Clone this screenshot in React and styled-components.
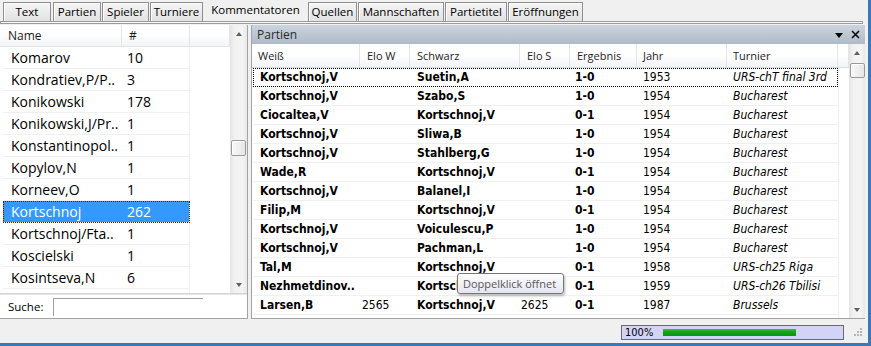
import React from 'react';
import styled, { createGlobalStyle } from 'styled-components';

const Global = createGlobalStyle`
  html, body { margin: 0; padding: 0; background: #f0f0f0; }
  body { font-family: "Open Sans", "Noto Sans", sans-serif; overflow: hidden; }
  * { box-sizing: border-box; }
`;

const UI = `"Open Sans", "Noto Sans", sans-serif`;
const GRID = `"DejaVu Sans Condensed", "DejaVu Sans", sans-serif`;

const Window = styled.div`
  width: 871px;
  height: 346px;
  display: flex;
  flex-direction: column;
  background: #f0f0f0;
  overflow: hidden;
`;
const Frame = styled.div`
  flex: 1;
  display: flex;
  min-height: 0;
`;
const Main = styled.div`
  width: 865px;
  display: flex;
  flex-direction: column;
`;
const EdgeGap = styled.div`
  width: 3px;
`;
const EdgeBlue = styled.div`
  width: 3px;
  background: #3d77b6;
`;
const BottomEdge = styled.div`
  height: 3px;
  background: #3d77b6;
`;

/* ---------- tabs ---------- */
const TabBar = styled.div`
  height: 21px;
  display: flex;
  align-items: flex-end;
  padding-left: 3px;
`;
const Tab = styled.div`
  width: ${p => p.w}px;
  margin-right: ${p => p.gap ?? 1}px;
  height: ${p => (p.active ? 21 : 19)}px;
  border: 1px solid ${p => (p.active ? 'transparent' : '#8e8f90')};
  border-bottom: none;
  background: ${p => (p.active ? '#f0f0f0' : 'linear-gradient(#f5f5f5, #e2e2e2)')};
  box-shadow: ${p => (p.active ? 'none' : 'inset 1px 1px 0 #fdfdfd')};
  font-family: ${UI};
  font-size: 11.5px;
  line-height: ${p => (p.active ? 18 : 17)}px;
  color: #000;
  text-align: center;
  white-space: nowrap;
`;
const TabLine = styled.div`
  width: 863px;
  height: 3px;
  border: 1px solid #9b9b9b;
  background: #fafafa;
  margin-bottom: 1px;
`;

/* ---------- body ---------- */
const Body = styled.div`
  height: 294px;
  display: flex;
`;
const LeftPanel = styled.div`
  width: 248px;
  display: flex;
  flex-direction: column;
  background: #fff;
  border-right: 1px solid #a3a3a3;
  border-bottom: 1px solid #a3a3a3;
`;
const ListArea = styled.div`
  height: 268px;
  display: flex;
`;
const List = styled.div`
  width: 230px;
  display: flex;
  flex-direction: column;
  overflow: hidden;
`;
const ListHeader = styled.div`
  height: 22px;
  display: grid;
  grid-template-columns: 122px 68px 1fr;
  background: linear-gradient(#ffffff 0%, #ffffff 45%, #f3f4f6 100%);
  border-bottom: 1px solid #e3e3e3;
`;
const ListHeadCell = styled.div`
  padding-left: ${p => p.pad}px;
  border-right: 1px solid #e3e5e8;
  font-family: ${UI};
  font-size: 12px;
  line-height: 21px;
  color: #1b1b1b;
`;
const ListRow = styled.div`
  margin-left: 3px;
  width: 187px;
  height: 22px;
  flex-shrink: 0;
  display: grid;
  grid-template-columns: 119px 1fr;
  border-bottom: 1px solid #f0f0f0;
  border-right: 1px solid #f0f0f0;
  background: ${p => (p.selected ? '#3399ff' : '#fff')};
  outline: ${p => (p.selected ? '1px dotted #3a2a10' : 'none')};
  outline-offset: -1px;
  color: ${p => (p.selected ? '#fff' : '#000')};
  font-family: ${UI};
  font-size: 14px;
  line-height: 21px;
`;
const ListCell = styled.div`
  padding-left: ${p => p.pad}px;
  white-space: nowrap;
  overflow: hidden;
`;
const SearchSep = styled.div`
  height: 2px;
  background: #e6e6e6;
  border-top: 1px solid #d4d4d4;
`;
const SearchRow = styled.div`
  flex: 1;
  display: flex;
  align-items: center;
  padding-left: 8px;
  font-family: ${UI};
  font-size: 11.5px;
  color: #000;
`;
const SearchInput = styled.div`
  margin-left: 10px;
  width: 150px;
  height: 18px;
  border-top: 1px solid #a0a0a0;
  border-left: 1px solid #a0a0a0;
  background: #fff;
`;

const Splitter = styled.div`
  width: 3px;
  background: #f0f0f0;
`;

const RightPanel = styled.div`
  flex: 1;
  position: relative;
  display: flex;
  flex-direction: column;
  background: #fff;
  border-left: 1px solid #a3a3a3;
  border-bottom: 1px solid #a3a3a3;
`;
const PanelHeader = styled.div`
  height: 19px;
  display: flex;
  align-items: center;
  padding: 0 5px 0 5px;
  background: linear-gradient(#cbd5df 0%, #bcc7d2 50%, #aebbc7 100%);
  font-family: ${UI};
  font-size: 12px;
  color: #2a2a2a;
`;
const PanelTitle = styled.div`
  flex: 1;
`;
const PanelIcons = styled.div`
  display: flex;
  align-items: center;
  gap: 8px;
  padding-right: 0px;
`;
const DropTri = styled.div`
  width: 0;
  height: 0;
  border-left: 4.5px solid transparent;
  border-right: 4.5px solid transparent;
  border-top: 5px solid #000;
  margin-top: 2px;
`;
const TableArea = styled.div`
  flex: 1;
  display: flex;
  min-height: 0;
`;
const TableWrap = styled.div`
  flex: 1;
  display: flex;
  flex-direction: column;
  overflow: hidden;
`;
const COLS = `108px 50px 110px 50px 67px 90px 111px 1fr`;
const THead = styled.div`
  height: 24px;
  flex-shrink: 0;
  display: grid;
  grid-template-columns: ${COLS};
  background: linear-gradient(#ffffff 0%, #ffffff 45%, #f2f3f5 100%);
  border-bottom: 1px solid #dcdcdc;
`;
const TH = styled.div`
  padding-left: ${p => p.pad}px;
  border-right: 1px solid #e3e5e8;
  font-family: ${UI};
  font-size: 11px;
  line-height: 23px;
  color: #1e1e1e;
  white-space: nowrap;
`;
const TBody = styled.div`
  flex: 1;
  display: flex;
`;
const Rows = styled.div`
  width: 586px;
  display: flex;
  flex-direction: column;
`;
const Filler = styled.div`
  flex: 1;
  border-left: 1px solid #f0f0f0;
`;
const TR = styled.div`
  height: 19px;
  flex-shrink: 0;
  display: grid;
  grid-template-columns: 108px 50px 110px 50px 67px 90px 1fr;
  border-bottom: 1px solid #f0f0f0;
  outline: ${p => (p.focused ? '1px dotted #000' : 'none')};
  outline-offset: -1px;
  margin-left: 1px;
  font-family: ${GRID};
  font-size: 12px;
  line-height: 18px;
  color: #000;
`;
const TD = styled.div`
  padding-left: ${p => p.pad}px;
  font-weight: ${p => (p.bold ? 700 : 400)};
  font-style: ${p => (p.italic ? 'italic' : 'normal')};
  white-space: nowrap;
  overflow: hidden;
`;

/* ---------- scrollbars ---------- */
const VScroll = styled.div`
  width: ${p => p.w}px;
  display: flex;
  flex-direction: column;
  align-items: center;
  background: linear-gradient(90deg, #e4e4e4 0%, #f1f1f1 25%, #f4f4f4 75%, #e8e8e8 100%);
`;
const ArrowBox = styled.div`
  height: 17px;
  width: 100%;
  display: flex;
  align-items: center;
  justify-content: center;
  flex-shrink: 0;
`;
const Arrow = styled.div`
  width: 0;
  height: 0;
  border-left: 3.5px solid transparent;
  border-right: 3.5px solid transparent;
  ${p => (p.down ? 'border-top: 4px solid #606060;' : 'border-bottom: 4px solid #606060;')}
`;
const Thumb = styled.div`
  width: 15px;
  height: ${p => p.h}px;
  margin-top: ${p => p.top}px;
  border: 1px solid #9a9a9a;
  border-radius: 2px;
  background: linear-gradient(90deg, #f9f9f9, #e6e6e6);
  box-shadow: inset 1px 1px 0 #fff;
`;
const Track = styled.div`
  flex: 1;
`;

/* ---------- status bar ---------- */
const StatusBar = styled.div`
  flex: 1;
  display: flex;
  align-items: center;
  justify-content: flex-end;
  padding-right: 3px;
  padding-top: 2px;
`;
const Progress = styled.div`
  width: 223px;
  height: 15px;
  display: flex;
  align-items: center;
  padding-left: 3px;
  border: 1px solid #6b6b6b;
  background: #d2d3f7;
  font-family: ${GRID};
  font-size: 11px;
  color: #000;
  margin-right: 10px;
`;
const ProgressFill = styled.div`
  width: 133px;
  height: 7px;
  margin-left: 10px;
  background: linear-gradient(#3fbf3f 0%, #17a317 40%, #0e920e 100%);
`;

const Tooltip = styled.div`
  position: absolute;
  left: 205px;
  top: 248px;
  width: 107px;
  height: 21px;
  padding-left: 5px;
  border: 1px solid #767676;
  border-radius: 3px;
  background: linear-gradient(#ffffff, #e4e5f0);
  box-shadow: 1px 2px 3px rgba(0, 0, 0, 0.28);
  font-family: ${UI};
  font-size: 11px;
  line-height: 19px;
  color: #575757;
  white-space: nowrap;
`;

const tabs = [
  { t: 'Text', w: 48, gap: 2 },
  { t: 'Partien', w: 48, gap: 1 },
  { t: 'Spieler', w: 47, gap: 1 },
  { t: 'Turniere', w: 53, gap: 1 },
  { t: 'Kommentatoren', w: 103, gap: 1, active: true },
  { t: 'Quellen', w: 49, gap: 1 },
  { t: 'Mannschaften', w: 86, gap: 1 },
  { t: 'Partietitel', w: 62, gap: 1 },
  { t: 'Eröffnungen', w: 75, gap: 0 },
];

const names = [
  ['Komarov', '10'],
  ['Kondratiev,P/P..', '3'],
  ['Konikowski', '178'],
  ['Konikowski,J/Pr..', '1'],
  ['Konstantinopol..', '1'],
  ['Kopylov,N', '1'],
  ['Korneev,O', '1'],
  ['Kortschnoj', '262', true],
  ['Kortschnoj/Fta..', '1'],
  ['Koscielski', '1'],
  ['Kosintseva,N', '6'],
  ['', ''],
];

const K = 'Kortschnoj,V';
const games = [
  [K, '', 'Suetin,A', '', '1-0', '1953', 'URS-chT final 3rd'],
  [K, '', 'Szabo,S', '', '1-0', '1954', 'Bucharest'],
  ['Ciocaltea,V', '', K, '', '0-1', '1954', 'Bucharest'],
  [K, '', 'Sliwa,B', '', '1-0', '1954', 'Bucharest'],
  [K, '', 'Stahlberg,G', '', '1-0', '1954', 'Bucharest'],
  ['Wade,R', '', K, '', '0-1', '1954', 'Bucharest'],
  [K, '', 'Balanel,I', '', '1-0', '1954', 'Bucharest'],
  ['Filip,M', '', K, '', '0-1', '1954', 'Bucharest'],
  [K, '', 'Voiculescu,P', '', '1-0', '1954', 'Bucharest'],
  [K, '', 'Pachman,L', '', '1-0', '1954', 'Bucharest'],
  ['Tal,M', '', K, '', '0-1', '1958', 'URS-ch25 Riga'],
  ['Nezhmetdinov..', '', K, '', '0-1', '1959', 'URS-ch26 Tbilisi'],
  ['Larsen,B', '2565', K, '2625', '0-1', '1987', 'Brussels'],
];

const headers = [
  ['Weiß', 6],
  ['Elo W', 7],
  ['Schwarz', 7],
  ['Elo S', 7],
  ['Ergebnis', 7],
  ['Jahr', 6],
  ['Turnier', 6],
  ['', 0],
];

const CloseIcon = () => (
  <svg width="9" height="9" viewBox="0 0 9 9">
    <path d="M1 1 L8 8 M8 1 L1 8" stroke="#000" strokeWidth="1.5" fill="none" />
  </svg>
);

const Grip = () => (
  <svg width="8" height="10" viewBox="0 0 8 10">
    {[[6, 1], [6, 4], [3, 4], [6, 7], [3, 7], [0, 7]].map(([x, y], i) => (
      <rect key={i} x={x} y={y} width="2" height="2" fill="#b5b5b5" />
    ))}
  </svg>
);

export default function App() {
  return (
    <>
      <Global />
      <Window>
        <Frame>
          <Main>
            <TabBar>
              {tabs.map(tb => (
                <Tab key={tb.t} w={tb.w} gap={tb.gap} active={tb.active}>
                  {tb.t}
                </Tab>
              ))}
            </TabBar>
            <TabLine />
            <Body>
              <LeftPanel>
                <ListArea>
                  <List>
                    <ListHeader>
                      <ListHeadCell pad={8}>Name</ListHeadCell>
                      <ListHeadCell pad={7}>#</ListHeadCell>
                      <ListHeadCell pad={0} />
                    </ListHeader>
                    {names.map(([n, c, sel], i) => (
                      <ListRow key={i} selected={sel}>
                        <ListCell pad={8}>{n}</ListCell>
                        <ListCell pad={5}>{c}</ListCell>
                      </ListRow>
                    ))}
                  </List>
                  <VScroll w={17}>
                    <ArrowBox><Arrow /></ArrowBox>
                    <Thumb top={98} h={16} />
                    <Track />
                    <ArrowBox><Arrow down /></ArrowBox>
                  </VScroll>
                </ListArea>
                <SearchSep />
                <SearchRow>
                  Suche:
                  <SearchInput />
                </SearchRow>
              </LeftPanel>
              <Splitter />
              <RightPanel>
                <PanelHeader>
                  <PanelTitle>Partien</PanelTitle>
                  <PanelIcons>
                    <DropTri />
                    <CloseIcon />
                  </PanelIcons>
                </PanelHeader>
                <TableArea>
                  <TableWrap>
                    <THead>
                      {headers.map(([h, p], i) => (
                        <TH key={i} pad={p}>{h}</TH>
                      ))}
                    </THead>
                    <TBody>
                      <Rows>
                        {games.map((g, i) => (
                          <TR key={i} focused={i === 0}>
                            <TD pad={7} bold>{g[0]}</TD>
                            <TD pad={1}>{g[1]}</TD>
                            <TD pad={6} bold>{g[2]}</TD>
                            <TD pad={0}>{g[3]}</TD>
                            <TD pad={4} bold>{g[4]}</TD>
                            <TD pad={5}>{g[5]}</TD>
                            <TD pad={5} italic>{g[6]}</TD>
                          </TR>
                        ))}
                      </Rows>
                      <Filler />
                    </TBody>
                  </TableWrap>
                  <VScroll w={16}>
                    <ArrowBox><Arrow /></ArrowBox>
                    <Thumb top={2} h={15} />
                    <Track />
                    <ArrowBox><Arrow down /></ArrowBox>
                  </VScroll>
                </TableArea>
                <Tooltip>Doppelklick öffnet</Tooltip>
              </RightPanel>
            </Body>
            <StatusBar>
              <Progress>
                100%
                <ProgressFill />
              </Progress>
              <Grip />
            </StatusBar>
          </Main>
          <EdgeGap />
          <EdgeBlue />
        </Frame>
        <BottomEdge />
      </Window>
    </>
  );
}
